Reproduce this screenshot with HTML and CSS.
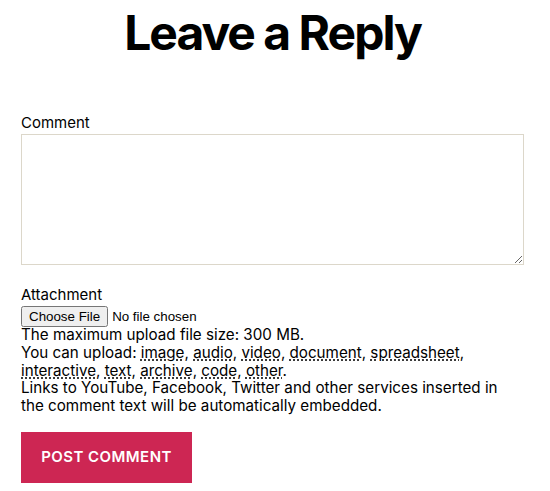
FILE: index.html
```html
<!DOCTYPE html>
<html lang="en">
<head>
<meta charset="utf-8">
<title>Leave a Reply</title>
<link rel="stylesheet" href="styles.css">
</head>
<body>
<div class="respond">
  <h2 class="reply-title">Leave a Reply</h2>
  <form class="comment-form">
    <div class="field comment-field">
      <label class="field-label" for="comment">Comment</label>
      <textarea id="comment" class="comment-box"></textarea>
    </div>
    <div class="field attach-field">
      <label class="field-label" for="attachment">Attachment</label>
      <input type="file" id="attachment" class="file-input">
      <div class="notes">
        <div>The maximum upload file size: 300 MB.</div>
        <div>You can upload: <abbr title="image">image</abbr>, <abbr title="audio">audio</abbr>, <abbr title="video">video</abbr>, <abbr title="document">document</abbr>, <abbr title="spreadsheet">spreadsheet</abbr>, <abbr title="interactive">interactive</abbr>, <abbr title="text">text</abbr>, <abbr title="archive">archive</abbr>, <abbr title="code">code</abbr>, <abbr title="other">other</abbr>.</div>
        <div>Links to YouTube, Facebook, Twitter and other services inserted in the comment text will be automatically embedded.</div>
      </div>
    </div>
    <div class="submit-row">
      <button type="button" class="submit-btn">Post Comment</button>
    </div>
  </form>
</div>
</body>
</html>
```
FILE: styles.css
```css
html, body {
  margin: 0;
  padding: 0;
  background: #fff;
}
body {
  font-family: Inter, "Noto Sans", sans-serif;
  color: #000;
}
.respond {
  padding: 0 26px 0 21px;
}
.reply-title {
  margin: 0;
  padding-top: 3px;
  text-align: center;
  font-size: 48px;
  line-height: 60px;
  font-weight: 700;
  letter-spacing: -0.0415em;
}
.comment-form {
  margin-top: 50px;
}
.field-label {
  display: block;
  font-size: 15px;
  line-height: 20px;
  margin-bottom: 1px;
}
.comment-box {
  display: block;
  box-sizing: border-box;
  width: 503px;
  height: 131px;
  margin: 0;
  border: 1px solid #dcd7ca;
  border-radius: 0;
  background: #fff;
  resize: vertical;
}
.attach-field {
  margin-top: 20px;
}
.file-input {
  display: block;
  margin: 0;
  font-family: "Liberation Sans", Arial, sans-serif;
  font-size: 13.33px;
}
.notes {
  font-size: 15.2px;
  line-height: 17.75px;
  margin-top: -1px;
}
.notes abbr {
  text-decoration: underline dotted;
  text-underline-offset: 2px;
}
.submit-row {
  margin-top: 17px;
}
.submit-btn {
  display: block;
  background: #cd2653;
  color: #fff;
  border: none;
  border-radius: 0;
  font-family: Inter, sans-serif;
  font-size: 15px;
  font-weight: 600;
  letter-spacing: 0.03em;
  text-transform: uppercase;
  white-space: nowrap;
  text-align: center;
  line-height: 18px;
  padding: 0;
  width: 171px;
  height: 51px;
}
```
